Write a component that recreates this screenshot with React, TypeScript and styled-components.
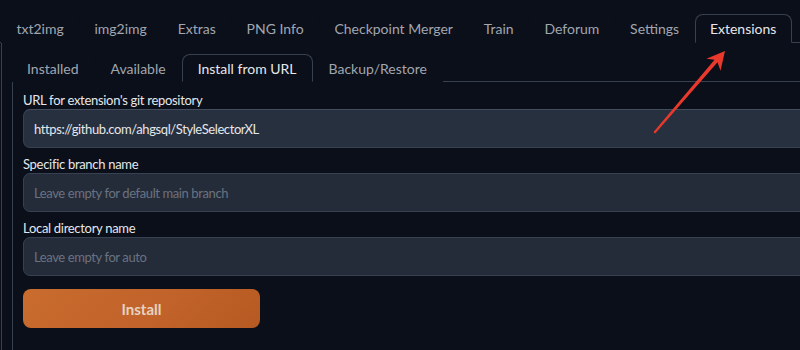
import React from 'react'
import styled, { createGlobalStyle } from 'styled-components'

const COLORS = {
  bg: '#0b0f19',
  border: '#374151',
  input: '#242c3a',
  inputFocus: '#27303e',
  text: '#e5e7eb',
  muted: '#a1a6b0',
  placeholder: '#6b7280',
  arrow: '#e8392c',
}

const FONT = "Lato, 'Noto Sans', sans-serif"

const GlobalStyle = createGlobalStyle`
  html, body {
    margin: 0;
    padding: 0;
    background: ${COLORS.bg};
    overflow: hidden;
  }
  body {
    font-family: ${FONT};
  }
`

const Page = styled.div`
  position: relative;
  width: 840px;
  height: 350px;
  background: ${COLORS.bg};
`

const TabNav = styled.div<{ $inset?: number }>`
  display: flex;
  align-items: flex-end;
  padding-left: ${(p) => p.$inset ?? 0}px;
  border-bottom: 1px solid ${COLORS.border};
`

const Tab = styled.div<{ $active?: boolean; $small?: boolean }>`
  height: ${(p) => (p.$small ? 26 : 27)}px;
  padding: 0 ${(p) => (p.$small ? 15 : 14.4)}px;
  display: flex;
  align-items: center;
  font-size: 14px;
  color: ${(p) => (p.$active ? COLORS.text : COLORS.muted)};
  border: 1px solid ${(p) => (p.$active ? COLORS.border : 'transparent')};
  border-bottom-color: ${(p) => (p.$active ? COLORS.bg : 'transparent')};
  border-radius: 8px 8px 0 0;
  margin-bottom: -1px;
  background: ${COLORS.bg};
  white-space: nowrap;
`

const TopBar = styled.div`
  padding-top: 14px;
`

const OuterPanel = styled.div`
  margin-left: 1px;
  border-left: 1px solid ${COLORS.border};
  padding: 11px 0 0 9px;
  height: 300px;
`

const InnerPanel = styled.div`
  border-left: 1px solid ${COLORS.border};
  margin-left: 1px;
  padding: 10px 0 0 10px;
  display: flex;
  flex-direction: column;
  gap: 8px;
  height: 260px;
`

const Field = styled.label`
  display: flex;
  flex-direction: column;
`

const Label = styled.span`
  font-size: 13px;
  line-height: 17px;
  letter-spacing: -0.3px;
  color: ${COLORS.text};
`

const TextInput = styled.input<{ $focused?: boolean }>`
  box-sizing: border-box;
  height: 39px;
  width: 100%;
  padding: 0 10px;
  font-family: ${FONT};
  font-size: 13px;
  letter-spacing: -0.4px;
  color: ${COLORS.text};
  background: ${(p) => (p.$focused ? COLORS.inputFocus : COLORS.input)};
  border: 1px solid ${COLORS.border};
  border-top-color: ${(p) => (p.$focused ? '#434d5e' : COLORS.border)};
  border-radius: 7px;
  outline: none;
  &::placeholder {
    color: ${COLORS.placeholder};
  }
`

const InstallButton = styled.button`
  margin-top: 5px;
  width: 237px;
  height: 39px;
  border: none;
  border-radius: 8px;
  background: linear-gradient(135deg, #c96c2e 0%, #c0622a 60%, #b55a22 100%);
  color: #e6d3c1;
  font-family: ${FONT};
  font-size: 15px;
  font-weight: 700;
  cursor: pointer;
`

const Overlay = styled.svg`
  position: absolute;
  left: 0;
  top: 0;
  pointer-events: none;
`

const topTabs = ['txt2img', 'img2img', 'Extras', 'PNG Info', 'Checkpoint Merger', 'Train', 'Deforum', 'Settings', 'Extensions']
const subTabs = ['Installed', 'Available', 'Install from URL', 'Backup/Restore']

const App = () => {
  return (
    <React.Fragment>
      <GlobalStyle />
      <Page>
        <TopBar>
          <TabNav $inset={1}>
            {topTabs.map((t) => (
              <Tab key={t} $active={t === 'Extensions'}>
                {t}
              </Tab>
            ))}
          </TabNav>
        </TopBar>
        <OuterPanel>
          <TabNav>
            {subTabs.map((t) => (
              <Tab key={t} $small $active={t === 'Install from URL'}>
                {t}
              </Tab>
            ))}
          </TabNav>
          <InnerPanel>
            <Field>
              <Label>URL for extension's git repository</Label>
              <TextInput $focused defaultValue="https://github.com/ahgsql/StyleSelectorXL" />
            </Field>
            <Field>
              <Label>Specific branch name</Label>
              <TextInput placeholder="Leave empty for default main branch" />
            </Field>
            <Field>
              <Label>Local directory name</Label>
              <TextInput placeholder="Leave empty for auto" />
            </Field>
            <InstallButton>Install</InstallButton>
          </InnerPanel>
        </OuterPanel>
        {/* annotation arrow pointing at the Extensions tab */}
        <Overlay width="800" height="350" viewBox="0 0 800 350">
          <polygon
            fill={COLORS.arrow}
            points="654.2,131.3 714.5,59.7 706.4,58.7 725,51 720.5,70.8 717.5,62.3 655.8,132.7"
          />
          <circle cx="655" cy="132" r="1.2" fill={COLORS.arrow} />
        </Overlay>
      </Page>
    </React.Fragment>
  )
}

export default App
